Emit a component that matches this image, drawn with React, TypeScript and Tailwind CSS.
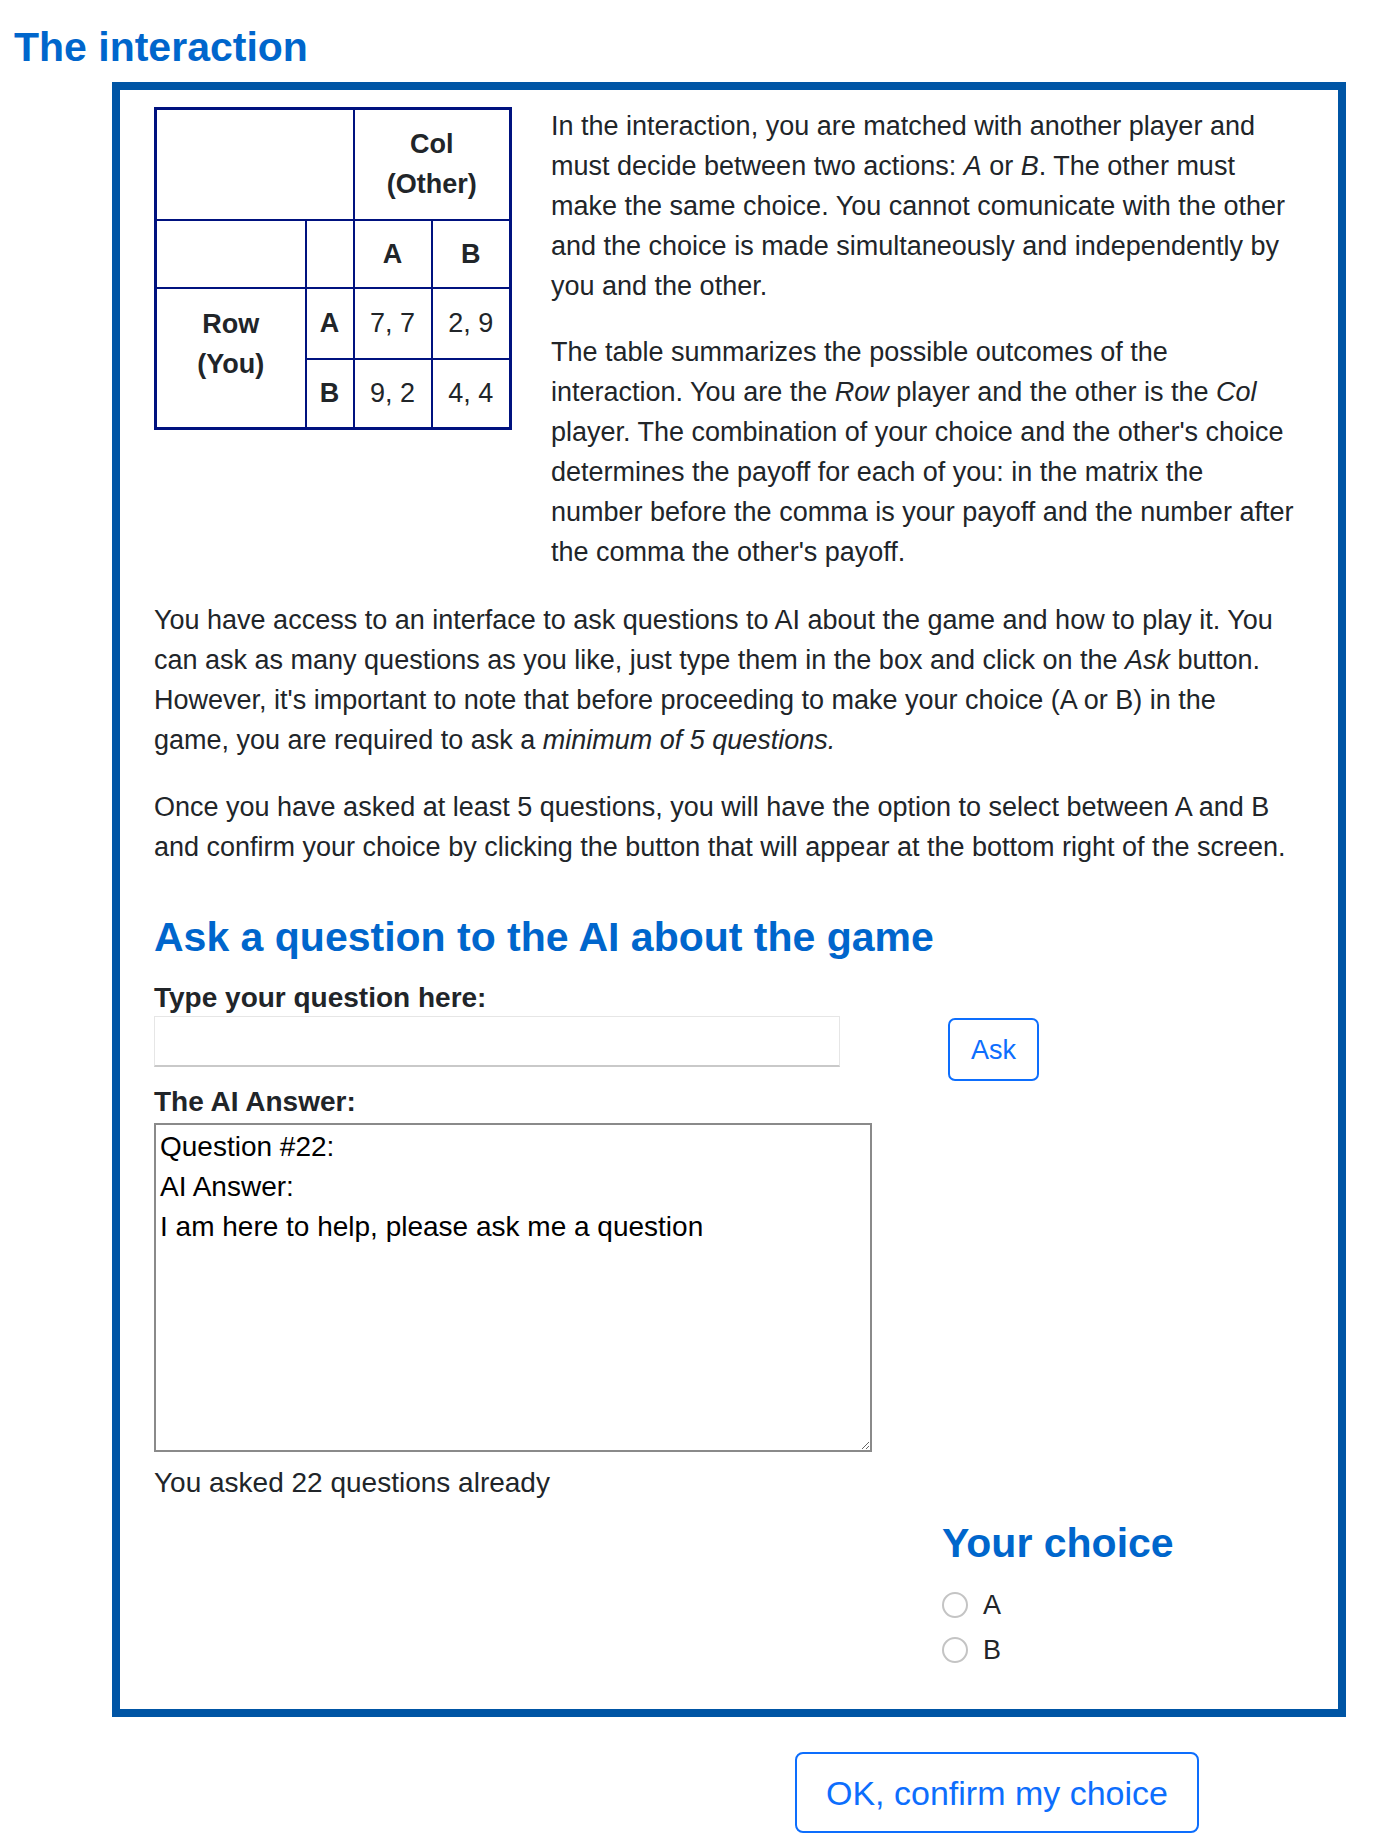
const blue = "text-[#0066cc]";

function PayoffTable() {
  const cell = "border-2 border-[#00127f] text-center align-middle";
  return (
    <table className="mt-[1px] w-[355px] table-fixed border-collapse border-[3px] border-[#00127f] text-[27px] leading-[40px]">
      <colgroup>
        <col className="w-[150px]" />
        <col className="w-[48px]" />
        <col className="w-[78px]" />
        <col className="w-[79px]" />
      </colgroup>
      <tbody>
        <tr className="h-[111px]">
          <td colSpan={2} className={cell} />
          <th colSpan={2} className={`${cell} font-bold`}>
            Col
            <br />
            (Other)
          </th>
        </tr>
        <tr className="h-[68px]">
          <td className={cell} />
          <td className={cell} />
          <th className={`${cell} font-bold`}>A</th>
          <th className={`${cell} font-bold`}>B</th>
        </tr>
        <tr className="h-[71px]">
          <th rowSpan={2} className={`${cell} pb-[28px] font-bold`}>
            Row
            <br />
            (You)
          </th>
          <th className={`${cell} font-bold`}>A</th>
          <td className={cell}>7, 7</td>
          <td className={cell}>2, 9</td>
        </tr>
        <tr className="h-[70px]">
          <th className={`${cell} font-bold`}>B</th>
          <td className={cell}>9, 2</td>
          <td className={cell}>4, 4</td>
        </tr>
      </tbody>
    </table>
  );
}

function Choice({ label }: { label: string }) {
  return (
    <label className="flex h-[45px] items-center gap-[15px]">
      <input
        type="radio"
        name="choice"
        className="h-[26px] w-[26px] appearance-none rounded-full border-2 border-[#c4c4c4] bg-white"
      />
      <span>{label}</span>
    </label>
  );
}

export default function App() {
  return (
    <div className="min-h-[1848px] bg-white pb-4 font-['Liberation_Sans',Arial,sans-serif] text-[27px] leading-[40px] text-[#212529]">
      <h2 className={`ml-[14px] pt-[23px] text-[41px] font-bold leading-[48px] ${blue}`}>The interaction</h2>

      <div className="ml-[112px] mt-[11px] w-[1234px] border-8 border-[#0055a5] pb-[37px] pl-[34px] pr-[38px] pt-4">
        <div className="flex items-start gap-[39px]">
          <PayoffTable />
          <div className="w-[750px]">
            <p>
              In the interaction, you are matched with another player and must decide between two actions:{" "}
              <i>A</i> or <i>B</i>. The other must make the same choice. You cannot comunicate with the other and
              the choice is made simultaneously and independently by you and the other.
            </p>
            <p className="mt-[26px]">
              The table summarizes the possible outcomes of the interaction. You are the <i>Row</i> player and the
              other is the <i>Col</i> player. The combination of your choice and the other's choice determines the
              payoff for each of you: in the matrix the number before the comma is your payoff and the number after
              the comma the other's payoff.
            </p>
          </div>
        </div>

        <p className="mt-[28px] w-[1130px]">
          You have access to an interface to ask questions to AI about the game and how to play it. You can ask as
          many questions as you like, just type them in the box and click on the <i>Ask</i> button. However, it's
          important to note that before proceeding to make your choice (A or B) in the game, you are required to ask
          a <i>minimum of 5 questions.</i>
        </p>
        <p className="mt-[27px]">
          Once you have asked at least 5 questions, you will have the option to select between A and B and confirm
          your choice by clicking the button that will appear at the bottom right of the screen.
        </p>

        <h3 className={`mt-[46px] text-[41px] font-bold leading-[48px] ${blue}`}>
          Ask a question to the AI about the game
        </h3>

        <div className="mt-[19px] text-[28px] font-bold leading-[36px]">Type your question here:</div>
        <div className="flex items-start">
          <input
            type="text"
            className="h-[51px] w-[686px] border border-[#e6e6e6] border-b-2 border-b-[#c9c9c9] bg-white px-3 outline-none"
          />
          <button
            type="button"
            className="ml-[108px] mt-[2px] flex h-[63px] w-[91px] items-center justify-center rounded-[7px] border-2 border-[#0d6efd] text-[27px] text-[#0d6efd]"
          >
            Ask
          </button>
        </div>

        <div className="mt-[3px] text-[28px] font-bold leading-[36px]">The AI Answer:</div>
        <textarea
          readOnly
          value={"Question #22:\nAI Answer:\nI am here to help, please ask me a question"}
          className="mt-[3px] block h-[329px] w-[718px] border-2 border-[#8a8a8a] px-[4px] py-[2px] font-['Liberation_Sans',Arial,sans-serif] text-[28px] leading-[40px] text-black outline-none"
        />

        <p className="mt-[11px] text-[28px]">You asked 22 questions already</p>

        <div className="ml-[788px] mt-[16px]">
          <h3 className={`text-[41px] font-bold leading-[48px] ${blue}`}>Your choice</h3>
          <div className="mt-[15px]">
            <Choice label="A" />
            <Choice label="B" />
          </div>
        </div>
      </div>

      <button
        type="button"
        className="ml-[795px] mt-[35px] flex h-[81px] w-[404px] items-center justify-center rounded-lg border-2 border-[#0d6efd] text-[34px] text-[#0d6efd]"
      >
        OK, confirm my choice
      </button>
    </div>
  );
}
